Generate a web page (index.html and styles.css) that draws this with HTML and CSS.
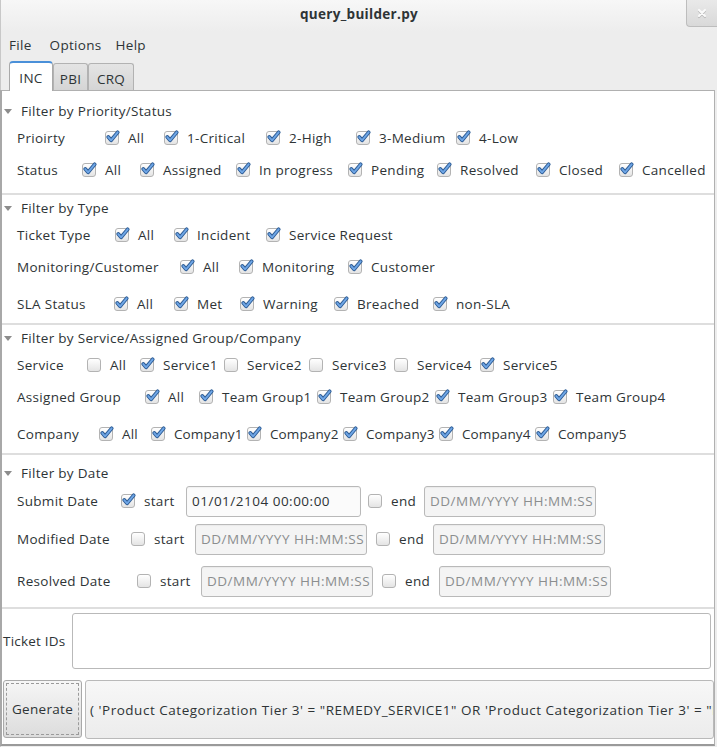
FILE: index.html
```html
<!DOCTYPE html>
<html>
<head>
<meta charset="utf-8">
<title>query_builder.py</title>
<link rel="stylesheet" href="styles.css">
</head>
<body>
<svg class="defs" aria-hidden="true">
  <symbol id="tick" viewBox="0 0 16 16">
    <path d="M3.5 7.5 L6.5 11 L13.5 2.5" fill="none" stroke="#2c5b94" stroke-width="4" stroke-linecap="round" stroke-linejoin="round"/>
    <path d="M3.5 7.5 L6.5 11 L13.5 2.5" fill="none" stroke="#6fa6e6" stroke-width="2" stroke-linecap="round" stroke-linejoin="round"/>
  </symbol>
</svg>
<div class="window">
  <header class="titlebar">
    <span class="title">query_builder.py</span>
    <span class="close"><svg width="10" height="10" viewBox="0 0 10 10"><path d="M2 2 L8 8 M8 2 L2 8" stroke="#fafafa" stroke-width="2.2" stroke-linecap="round"/></svg></span>
  </header>
  <nav class="menubar"><span class="menu">File</span><span class="menu">Options</span><span class="menu">Help</span></nav>
  <div class="tabs">
    <span class="tab active">INC</span><span class="tab pbi">PBI</span><span class="tab crq">CRQ</span>
  </div>
  <main class="page">
    <section class="group g1">
      <div class="expander"><span class="arrow"></span>Filter by Priority/Status</div>
      <div class="row cols-priority">
        <span class="label">Prioirty</span>
        <span class="chk"><span class="box"><svg><use href="#tick"/></svg></span>All</span>
        <span class="chk"><span class="box"><svg><use href="#tick"/></svg></span>1-Critical</span>
        <span class="chk"><span class="box"><svg><use href="#tick"/></svg></span>2-High</span>
        <span class="chk"><span class="box"><svg><use href="#tick"/></svg></span>3-Medium</span>
        <span class="chk"><span class="box"><svg><use href="#tick"/></svg></span>4-Low</span>
      </div>
      <div class="row cols-status">
        <span class="label">Status</span>
        <span class="chk"><span class="box"><svg><use href="#tick"/></svg></span>All</span>
        <span class="chk"><span class="box"><svg><use href="#tick"/></svg></span>Assigned</span>
        <span class="chk"><span class="box"><svg><use href="#tick"/></svg></span>In progress</span>
        <span class="chk"><span class="box"><svg><use href="#tick"/></svg></span>Pending</span>
        <span class="chk"><span class="box"><svg><use href="#tick"/></svg></span>Resolved</span>
        <span class="chk"><span class="box"><svg><use href="#tick"/></svg></span>Closed</span>
        <span class="chk"><span class="box"><svg><use href="#tick"/></svg></span>Cancelled</span>
      </div>
    </section>

    <section class="group g2">
      <div class="expander"><span class="arrow"></span>Filter by Type</div>
      <div class="row cols-ticket">
        <span class="label">Ticket Type</span>
        <span class="chk"><span class="box"><svg><use href="#tick"/></svg></span>All</span>
        <span class="chk"><span class="box"><svg><use href="#tick"/></svg></span>Incident</span>
        <span class="chk"><span class="box"><svg><use href="#tick"/></svg></span>Service Request</span>
      </div>
      <div class="row cols-monitor">
        <span class="label">Monitoring/Customer</span>
        <span class="chk"><span class="box"><svg><use href="#tick"/></svg></span>All</span>
        <span class="chk"><span class="box"><svg><use href="#tick"/></svg></span>Monitoring</span>
        <span class="chk"><span class="box"><svg><use href="#tick"/></svg></span>Customer</span>
      </div>
      <div class="row cols-sla row-gap5">
        <span class="label">SLA Status</span>
        <span class="chk"><span class="box"><svg><use href="#tick"/></svg></span>All</span>
        <span class="chk"><span class="box"><svg><use href="#tick"/></svg></span>Met</span>
        <span class="chk"><span class="box"><svg><use href="#tick"/></svg></span>Warning</span>
        <span class="chk"><span class="box"><svg><use href="#tick"/></svg></span>Breached</span>
        <span class="chk"><span class="box"><svg><use href="#tick"/></svg></span>non-SLA</span>
      </div>
    </section>

    <section class="group g3">
      <div class="expander"><span class="arrow"></span>Filter by Service/Assigned Group/Company</div>
      <div class="row cols-service">
        <span class="label">Service</span>
        <span class="chk"><span class="box"></span>All</span>
        <span class="chk"><span class="box"><svg><use href="#tick"/></svg></span>Service1</span>
        <span class="chk"><span class="box"></span>Service2</span>
        <span class="chk"><span class="box"></span>Service3</span>
        <span class="chk"><span class="box"></span>Service4</span>
        <span class="chk"><span class="box"><svg><use href="#tick"/></svg></span>Service5</span>
      </div>
      <div class="row cols-group">
        <span class="label">Assigned Group</span>
        <span class="chk"><span class="box"><svg><use href="#tick"/></svg></span>All</span>
        <span class="chk"><span class="box"><svg><use href="#tick"/></svg></span>Team Group1</span>
        <span class="chk"><span class="box"><svg><use href="#tick"/></svg></span>Team Group2</span>
        <span class="chk"><span class="box"><svg><use href="#tick"/></svg></span>Team Group3</span>
        <span class="chk"><span class="box"><svg><use href="#tick"/></svg></span>Team Group4</span>
      </div>
      <div class="row cols-company row-gap5">
        <span class="label">Company</span>
        <span class="chk"><span class="box"><svg><use href="#tick"/></svg></span>All</span>
        <span class="chk"><span class="box"><svg><use href="#tick"/></svg></span>Company1</span>
        <span class="chk"><span class="box"><svg><use href="#tick"/></svg></span>Company2</span>
        <span class="chk"><span class="box"><svg><use href="#tick"/></svg></span>Company3</span>
        <span class="chk"><span class="box"><svg><use href="#tick"/></svg></span>Company4</span>
        <span class="chk"><span class="box"><svg><use href="#tick"/></svg></span>Company5</span>
      </div>
    </section>

    <section class="group g4">
      <div class="expander"><span class="arrow"></span>Filter by Date</div>
      <div class="row cols-submit row-gap1">
        <span class="label">Submit Date</span>
        <span class="chk"><span class="box"><svg><use href="#tick"/></svg></span>start</span>
        <span class="entry wide">01/01/2104 00:00:00</span>
        <span class="chk"><span class="box"></span>end</span>
        <span class="entry placeholder">DD/MM/YYYY HH:MM:SS</span>
      </div>
      <div class="row cols-modified row-gap6">
        <span class="label">Modified Date</span>
        <span class="chk"><span class="box"></span>start</span>
        <span class="entry placeholder">DD/MM/YYYY HH:MM:SS</span>
        <span class="chk"><span class="box"></span>end</span>
        <span class="entry placeholder">DD/MM/YYYY HH:MM:SS</span>
      </div>
      <div class="row cols-resolved row-gap10">
        <span class="label">Resolved Date</span>
        <span class="chk"><span class="box"></span>start</span>
        <span class="entry placeholder">DD/MM/YYYY HH:MM:SS</span>
        <span class="chk"><span class="box"></span>end</span>
        <span class="entry placeholder">DD/MM/YYYY HH:MM:SS</span>
      </div>
    </section>

    <div class="ids">
      <span class="ids-label">Ticket IDs</span>
      <div class="textarea"></div>
    </div>

    <div class="actions">
      <span class="button"><span class="focus">Generate</span></span>
      <div class="output">( 'Product Categorization Tier 3' = "REMEDY_SERVICE1" OR 'Product Categorization Tier 3' = "REMEDY_SERVICE5" )</div>
    </div>
  </main>
</div>
</body>
</html>
```

FILE: styles.css
```css
* { box-sizing: border-box; }

html, body {
  margin: 0;
  padding: 0;
  width: 717px;
  height: 747px;
  overflow: hidden;
  background: #ededed;
}

body {
  font-family: "Open Sans", "DejaVu Sans", sans-serif;
  font-size: 13.5px;
  letter-spacing: 0.3px;
  color: #2e3436;
}

.defs {
  position: absolute;
  width: 0;
  height: 0;
  overflow: hidden;
}

.window {
  width: 717px;
  height: 747px;
  display: flex;
  flex-direction: column;
  background: #ededed;
  border-left: 1px solid #c8c8c8;
}

/* title bar */
.titlebar {
  height: 31px;
  flex: none;
  display: flex;
  align-items: center;
  justify-content: center;
  position: relative;
  background: linear-gradient(#f7f7f7, #ededed);
}

.title {
  font-weight: 700;
  font-size: 13.5px;
  letter-spacing: 0.3px;
  margin-top: -4px;
  color: #2e3436;
}

.close {
  position: absolute;
  right: 0;
  top: 0;
  width: 31px;
  height: 27px;
  border: 1px solid #bdbdbd;
  border-top: none;
  border-right: none;
  border-bottom-left-radius: 4px;
  background: linear-gradient(#e9e9e9, #d9d9d9);
  display: flex;
  align-items: center;
  justify-content: center;
}

.close svg { filter: drop-shadow(0 1px 0 #b8b8b8); }

/* menu */
.menubar {
  height: 27px;
  flex: none;
  display: flex;
  align-items: center;
}

.menu { padding: 0 8px; }
.menu:first-child { padding-right: 10px; }
.menu:nth-child(3) { padding-left: 6px; }

/* tabs */
.tabs {
  height: 33px;
  flex: none;
  display: flex;
  align-items: flex-end;
  padding-left: 8px;
  position: relative;
  z-index: 1;
  margin-bottom: -1px;
}

.tab {
  height: 27px;
  padding-top: 3px;
  display: flex;
  align-items: center;
  justify-content: center;
  border: 1px solid #b2b2b2;
  border-bottom: none;
  border-radius: 3px 3px 0 0;
  background: linear-gradient(#e4e4e4, #d5d5d5);
  margin-bottom: 1px;
  color: #2e3436;
}

.tab.pbi { width: 35px; }
.tab.crq { width: 46px; }

.tab.active {
  width: 44px;
  height: 30px;
  margin-bottom: 0;
  background: #ffffff;
  border-color: #a9a9a9;
  border-top: 2px solid #4a90d9;
  border-radius: 4px 4px 0 0;
  padding-top: 2px;
  position: relative;
  z-index: 2;
}

/* page */
.page {
  flex: 1;
  background: #ffffff;
  border-top: 1px solid #b0b0b0;
  border-left: 2px solid #a8a8a8;
  border-right: 1px solid #b0b0b0;
  border-bottom: 2px solid #9a9a9a;
  margin: 0 2px 1px -1px;
  display: flex;
  flex-direction: column;
}

.group { border-bottom: 2px solid #dedede; }

.g1 { padding: 9px 0 7px; }
.g2 { padding: 2px 0 3px; }
.g3 { padding: 2px 0 3px; }
.g4 { padding: 7px 0 10px; }

.expander {
  height: 22px;
  display: flex;
  align-items: center;
  padding-left: 2px;
}

.arrow {
  width: 0;
  height: 0;
  border-left: 4.5px solid transparent;
  border-right: 4.5px solid transparent;
  border-top: 5px solid #8c8c8c;
  margin-right: 9px;
  margin-top: 1px;
}

.row {
  height: 32px;
  display: grid;
  align-items: center;
  padding-left: 15px;
  white-space: nowrap;
}

.row-gap1 { margin-top: 1px; }
.row-gap5 { margin-top: 5px; }
.row-gap6 { margin-top: 6px; }
.row-gap10 { margin-top: 10px; }

.cols-priority { grid-template-columns: 88px 59px 102px 90px 100px auto; }
.cols-status   { grid-template-columns: 65px 58px 96px 112px 89px 99px 83px auto; }
.cols-ticket   { grid-template-columns: 98px 59px 92px auto; }
.cols-monitor  { grid-template-columns: 163px 59px 109px auto; }
.cols-sla      { grid-template-columns: 97px 60px 66px 94px 99px auto; }
.cols-service  { grid-template-columns: 70px 53px 84px 85px 85px 86px auto; }
.cols-group    { grid-template-columns: 128px 54px 118px 118px 118px auto; }
.cols-company  { grid-template-columns: 82px 52px 96px 96px 96px 96px auto; }
.cols-submit   { grid-template-columns: 104px 65px 182px 56px auto; }
.cols-modified { grid-template-columns: 114px 64px 181px 57px auto; }
.cols-resolved { grid-template-columns: 120px 64px 181px 57px auto; }

.cols-company .chk { letter-spacing: 0.1px; }

.label { white-space: nowrap; }

.chk {
  display: flex;
  align-items: center;
  gap: 9px;
  white-space: nowrap;
}

.box {
  flex: none;
  width: 14px;
  height: 14px;
  border: 1px solid #b3b3b3;
  border-radius: 3px;
  background: linear-gradient(#ffffff, #e4e4e4);
  position: relative;
}

.box svg {
  position: absolute;
  left: -1px;
  top: -2px;
  width: 15px;
  height: 15px;
}

.entry {
  width: 172px;
  height: 31px;
  border: 1px solid #b9b9b9;
  border-radius: 3px;
  background: #fbfbfb;
  display: flex;
  align-items: center;
  padding-left: 5px;
  white-space: nowrap;
  overflow: hidden;
  letter-spacing: 0.5px;
  box-shadow: inset 0 1px 1px rgba(0,0,0,0.04);
}

.entry.wide { width: 175px; }

.entry.placeholder {
  color: #8b8e8f;
  background: #f4f4f4;
}

/* ticket ids */
.ids {
  display: flex;
  align-items: center;
  padding: 4px 3px 0 1px;
}

.ids-label {
  width: 69px;
  flex: none;
  white-space: nowrap;
  letter-spacing: 0.2px;
}

.textarea {
  flex: 1;
  height: 56px;
  border: 1px solid #b9b9b9;
  border-radius: 3px;
  background: #ffffff;
}

/* actions */
.actions {
  display: flex;
  gap: 3px;
  padding: 11px 0 0 1px;
}

.button {
  flex: none;
  width: 79px;
  height: 58px;
  border: 1px solid #a9a9a9;
  border-radius: 3px;
  background: linear-gradient(#f6f6f6, #dcdcdc);
  padding: 2px;
  display: flex;
}

.focus {
  flex: 1;
  border: 1px dashed #9a9a9a;
  display: flex;
  align-items: center;
  justify-content: center;
}

.output {
  flex: 1;
  min-width: 0;
  height: 59px;
  border: 1px solid #b9b9b9;
  border-radius: 3px;
  background: linear-gradient(#f7f7f7, #ececec);
  display: flex;
  align-items: center;
  padding-left: 4px;
  white-space: nowrap;
  overflow: hidden;
  letter-spacing: 0.52px;
}
```
